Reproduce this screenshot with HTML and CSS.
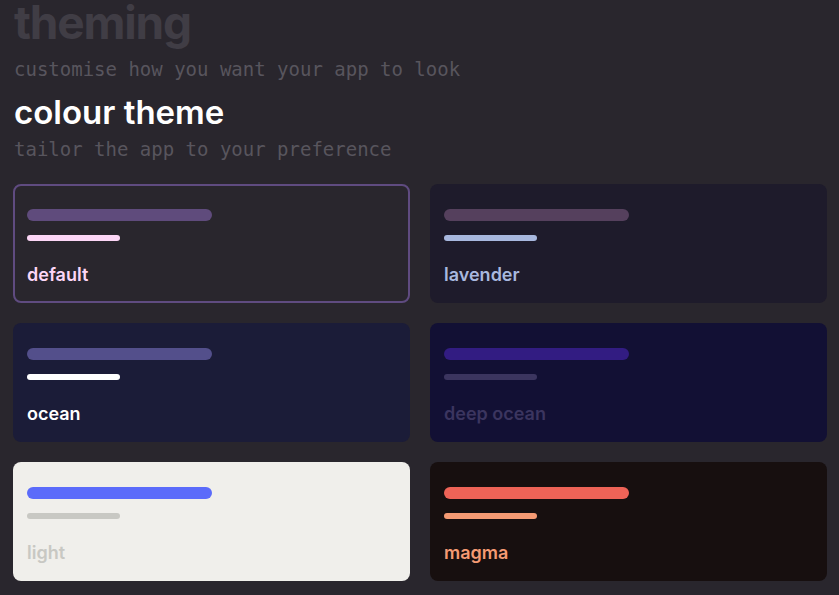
FILE: index.html
```html
<!DOCTYPE html>
<html>
<head>
<meta charset="utf-8">
<link rel="stylesheet" href="styles.css">
</head>
<body>
<main class="page">
  <h1 class="page-title">theming</h1>
  <p class="subtitle intro">customise how you want your app to look</p>
  <h2 class="section-title">colour theme</h2>
  <p class="subtitle section-sub">tailor the app to your preference</p>
  <div class="theme-grid">
    <div class="theme-card default selected">
      <div class="bar bar-main"></div>
      <div class="bar bar-sub"></div>
      <div class="theme-name">default</div>
    </div>
    <div class="theme-card lavender">
      <div class="bar bar-main"></div>
      <div class="bar bar-sub"></div>
      <div class="theme-name">lavender</div>
    </div>
    <div class="theme-card ocean">
      <div class="bar bar-main"></div>
      <div class="bar bar-sub"></div>
      <div class="theme-name">ocean</div>
    </div>
    <div class="theme-card deep-ocean">
      <div class="bar bar-main"></div>
      <div class="bar bar-sub"></div>
      <div class="theme-name">deep ocean</div>
    </div>
    <div class="theme-card light">
      <div class="bar bar-main"></div>
      <div class="bar bar-sub"></div>
      <div class="theme-name">light</div>
    </div>
    <div class="theme-card magma">
      <div class="bar bar-main"></div>
      <div class="bar bar-sub"></div>
      <div class="theme-name">magma</div>
    </div>
  </div>
</main>
</body>
</html>
```
FILE: styles.css
```css
html, body {
  margin: 0;
  padding: 0;
  background: #29262d;
  overflow: hidden;
}
.page {
  padding: 0 12px 0 13px;
  font-family: "Inter", "Lato", sans-serif;
}
.page-title {
  margin: 0 0 0 1px;
  font-size: 46px;
  line-height: 44px;
  font-weight: 700;
  color: #403d45;
  letter-spacing: -1.2px;
}
.subtitle {
  margin: 0 0 0 1px;
  font-family: "DejaVu Sans Mono", "Liberation Mono", monospace;
  font-size: 19px;
  line-height: 26px;
  color: #58555d;
}
.intro {
  margin-top: 12px;
}
.section-title {
  margin: 10px 0 0 1px;
  font-size: 33px;
  line-height: 40px;
  font-weight: 600;
  color: #ffffff;
}
.section-sub {
  margin-top: 4px;
}
.theme-grid {
  margin-top: 22px;
  display: grid;
  grid-template-columns: 1fr 1fr;
  gap: 20px;
}
.theme-card {
  box-sizing: border-box;
  height: 119px;
  border-radius: 8px;
  padding: 25px 14px 0 14px;
  display: flex;
  flex-direction: column;
  align-items: flex-start;
}
.bar {
  border-radius: 6px;
}
.bar-main {
  width: 185px;
  height: 12px;
}
.bar-sub {
  width: 93px;
  height: 6px;
  border-radius: 3px;
  margin-top: 14px;
}
.theme-name {
  margin-top: 24px;
  font-size: 18px;
  line-height: 20px;
  font-weight: 600;
}
.selected {
  border: 2px solid #5f4b80;
  padding: 23px 12px 0 12px;
}
.default { background: #29262d; }
.default .bar-main { background: #5f4b7c; }
.default .bar-sub { background: #fcd6f6; }
.default .theme-name { color: #fcd6f6; }

.lavender { background: #1e1b2b; }
.lavender .bar-main { background: #55405d; }
.lavender .bar-sub { background: #a8b8df; }
.lavender .theme-name { color: #a8b8df; }

.ocean { background: #1b1c38; }
.ocean .bar-main { background: #534f8b; }
.ocean .bar-sub { background: #ffffff; }
.ocean .theme-name { color: #ffffff; }

.deep-ocean { background: #121034; }
.deep-ocean .bar-main { background: #321c82; }
.deep-ocean .bar-sub { background: #3b355f; }
.deep-ocean .theme-name { color: #3b355f; }

.light { background: #f0efeb; }
.light .bar-main { background: #5b6bfa; }
.light .bar-sub { background: #c8c8c3; }
.light .theme-name { color: #c8c8c3; }

.magma { background: #170f0f; }
.magma .bar-main { background: #ee6357; }
.magma .bar-sub { background: #f59a73; }
.magma .theme-name { color: #f59a73; }
```
